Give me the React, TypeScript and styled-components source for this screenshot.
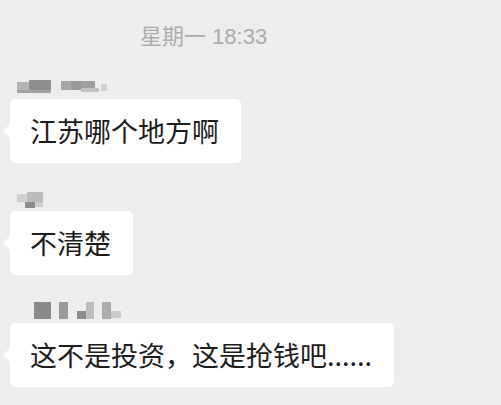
import React from 'react';
import styled, { createGlobalStyle } from 'styled-components';

const GlobalStyle = createGlobalStyle`
  html, body {
    margin: 0;
    padding: 0;
    background: #ededed;
  }
`;

const Screen = styled.main`
  width: 501px;
  height: 405px;
  overflow: hidden;
  background: #ededed;
  font-family: 'Noto Sans CJK SC', 'Noto Sans', sans-serif;
  display: flex;
  flex-direction: column;
  padding: 24px 0 0 10px;
  box-sizing: border-box;
`;

const TimeStamp = styled.div`
  margin-left: 130px;
  font-family: 'Liberation Sans', 'Noto Sans CJK SC', sans-serif;
  font-size: 22px;
  line-height: 26px;
  color: #acacac;
`;

const Group = styled.section<{ $top: number; $gap: number }>`
  display: flex;
  flex-direction: column;
  align-items: flex-start;
  margin-top: ${(p) => p.$top}px;
  gap: ${(p) => p.$gap}px;
`;

const NameMosaic = styled.svg<{ $indent: number }>`
  display: block;
  margin-left: ${(p) => p.$indent}px;
`;

const Bubble = styled.div`
  position: relative;
  background: #fff;
  border-radius: 5px;
  padding: 14px 22px 14px 20px;
  font-size: 27px;
  line-height: 36px;
  color: #1c1c1c;
  white-space: nowrap;

  &::before {
    content: '';
    position: absolute;
    left: -7px;
    top: 25px;
    border-top: 7px solid transparent;
    border-bottom: 7px solid transparent;
    border-right: 7px solid #fff;
  }
`;

type Cell = [number, number, number, number, string];

const Mosaic: React.FC<{ w: number; h: number; indent: number; cells: Cell[] }> = ({ w, h, indent, cells }) => (
  <NameMosaic $indent={indent} width={w} height={h} viewBox={`0 0 ${w} ${h}`}>
    {cells.map(([x, y, cw, ch, c], i) => (
      <rect key={i} x={x} y={y} width={cw} height={ch} fill={c} />
    ))}
  </NameMosaic>
);

const name1: Cell[] = [
  [0, 2, 12, 8, '#b4b4b4'],
  [12, 0, 22, 10, '#8e8e8e'],
  [0, 10, 34, 3, '#a2a2a2'],
  [44, 1, 10, 9, '#a8a8a8'],
  [54, 1, 10, 9, '#9a9a9a'],
  [64, 1, 14, 9, '#a0a0a0'],
  [64, 8, 18, 4, '#c2c2c2'],
  [84, 4, 6, 7, '#cfcfcf'],
];

const name2: Cell[] = [
  [0, 2, 10, 8, '#cfcfcf'],
  [10, 0, 16, 10, '#bcbcbc'],
  [8, 10, 10, 6, '#8c8c8c'],
  [18, 10, 8, 5, '#cdcdcd'],
];

const name3: Cell[] = [
  [0, 0, 17, 17, '#8a8a8a'],
  [25, 0, 9, 17, '#9a9a9a'],
  [43, 9, 9, 8, '#8c8c8c'],
  [52, 0, 8, 17, '#bdbdbd'],
  [68, 0, 9, 17, '#acacac'],
  [77, 9, 10, 7, '#cacaca'],
];

const App: React.FC = () => {
  return (
    <>
      <GlobalStyle />
      <Screen>
        <TimeStamp>星期一 18:33</TimeStamp>

        <Group $top={30} $gap={5}>
          <Mosaic w={92} h={14} indent={7} cells={name1} />
          <Bubble>江苏哪个地方啊</Bubble>
        </Group>

        <Group $top={29} $gap={3}>
          <Mosaic w={26} h={16} indent={7} cells={name2} />
          <Bubble>不清楚</Bubble>
        </Group>

        <Group $top={27} $gap={3}>
          <Mosaic w={88} h={18} indent={24} cells={name3} />
          <Bubble>这不是投资，这是抢钱吧......</Bubble>
        </Group>
      </Screen>
    </>
  );
};

export default App;
